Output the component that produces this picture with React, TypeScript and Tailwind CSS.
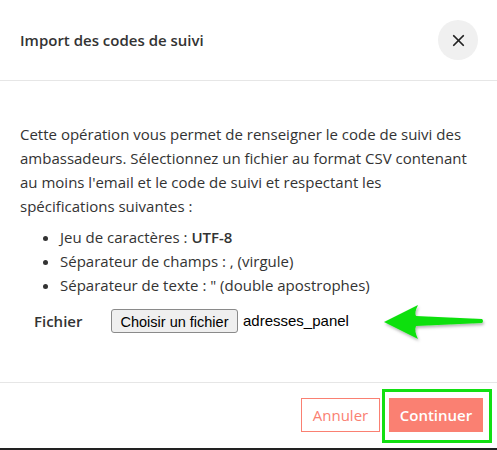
import { X } from 'lucide-react';

export default function App() {
  return (
    <div className="relative h-[450px] w-[497px] overflow-hidden bg-white text-[#333] font-['Open_Sans',sans-serif]">
      {/* header */}
      <div className="flex h-[81px] items-center justify-between border-b border-[#e6e6e6] pl-5 pr-[19px]">
        <h2 className="text-[15px] font-semibold text-[#333]">Import des codes de suivi</h2>
        <button className="flex h-10 w-10 items-center justify-center rounded-full bg-[#f0f0f0] text-[#222]">
          <X size={19} strokeWidth={2.2} />
        </button>
      </div>

      {/* body */}
      <div className="h-[302px] border-b border-[#e6e6e6] px-5 pt-[41px] text-[15px] leading-6">
        <p>
          Cette opération vous permet de renseigner le code de suivi des ambassadeurs. Sélectionnez un fichier au
          format CSV contenant au moins l'email et le code de suivi et respectant les spécifications suivantes :
        </p>
        <ul className="mt-[7px] list-disc pl-10">
          <li>
            Jeu de caractères : <b className="font-semibold">UTF-8</b>
          </li>
          <li>Séparateur de champs : , (virgule)</li>
          <li>Séparateur de texte : " (double apostrophes)</li>
        </ul>
        <div className="mt-3 flex items-center">
          <span className="w-[91px] pl-[14px] font-semibold">Fichier</span>
          <button className="h-[24px] w-[127px] rounded-[3px] border border-[#8a8a8a] bg-[#efefef] text-[14.5px] text-black font-['Liberation_Sans',Arial,sans-serif]">
            Choisir un fichier
          </button>
          <span className="ml-[5px] text-[15px] text-black font-['Liberation_Sans',Arial,sans-serif]">adresses_panel</span>
        </div>
      </div>

      {/* footer */}
      <div className="flex justify-end gap-[9px] pr-[14px] pt-[15px]">
        <button className="h-[34px] w-[79px] border border-[#fa8072] text-[15px] text-[#fa8072]">Annuler</button>
        <button className="h-[34px] w-[94px] bg-[#fa8072] text-[15px] font-semibold text-white">Continuer</button>
      </div>

      {/* annotation overlays */}
      <div className="absolute left-[382px] top-[389px] h-[54px] w-[110px] border-[3px] border-[#12e012]" />
      <svg className="absolute left-[380px] top-[300px]" width="110" height="45" viewBox="0 0 110 45">
        <defs>
          <filter id="sh" x="-20%" y="-20%" width="140%" height="160%">
            <feDropShadow dx="1" dy="2" stdDeviation="1.5" floodColor="#000" floodOpacity="0.3" />
          </filter>
        </defs>
        <path
          d="M4 22 L38 5 Q34 13 36 16 L102 19 Q104 21 102 23 L36 26 Q34 31 38 39 Z"
          fill="#11e011"
          filter="url(#sh)"
        />
      </svg>
      <div className="absolute bottom-0 left-0 h-[2px] w-full bg-[#222]" />
    </div>
  );
}
